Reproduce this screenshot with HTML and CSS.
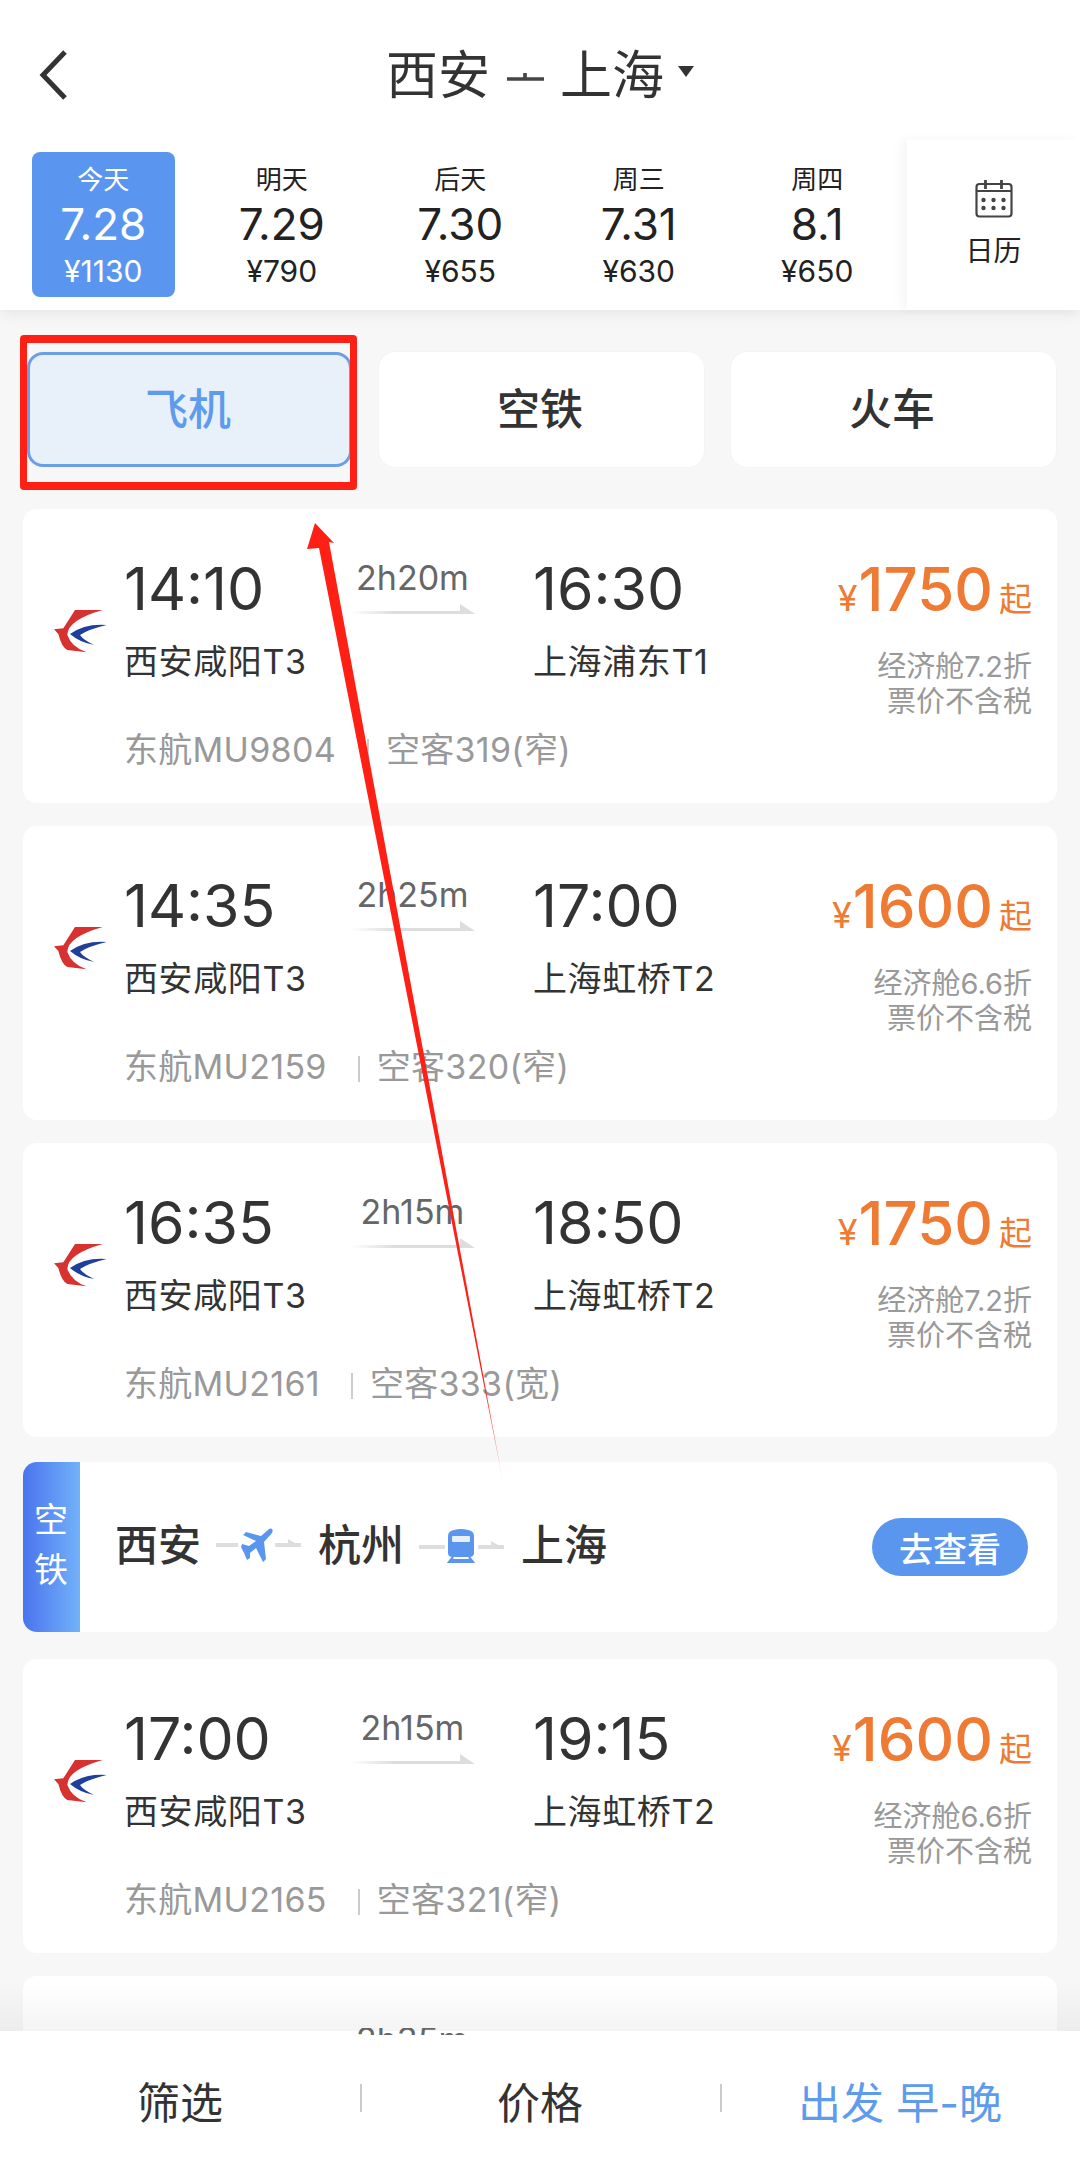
FILE: index.html
```html
<!DOCTYPE html>
<html lang="zh">
<head>
<meta charset="utf-8">
<title>西安 上海</title>
<link rel="stylesheet" href="styles.css">
</head>
<body>
<div class="page">
  <header class="head">
    <div class="nav">
      <svg class="back" viewBox="0 0 32 50"><path d="M28 2 L6 25 L28 48" fill="none" stroke="#333" stroke-width="5"/></svg>
      <div class="title">
        <span>西安</span>
        <svg class="title-arrow" viewBox="0 0 38 10"><path d="M0 8 H37 M18 8 V2" fill="none" stroke="#444" stroke-width="3.6"/></svg>
        <span>上海</span>
        <i class="caret"></i>
      </div>
    </div>
    <div class="strip">
      <div class="dates">
        <div class="date on"><span class="d-l">今天</span><span class="d-n">7.28</span><span class="d-p">¥1130</span></div>
        <div class="date"><span class="d-l">明天</span><span class="d-n">7.29</span><span class="d-p">¥790</span></div>
        <div class="date"><span class="d-l">后天</span><span class="d-n">7.30</span><span class="d-p">¥655</span></div>
        <div class="date"><span class="d-l">周三</span><span class="d-n">7.31</span><span class="d-p">¥630</span></div>
        <div class="date"><span class="d-l">周四</span><span class="d-n">8.1</span><span class="d-p">¥650</span></div>
      </div>
      <div class="cal">
        <svg class="cal-i" viewBox="0 0 38 38"><rect x="1.5" y="4" width="35" height="32.5" rx="3" fill="none" stroke="#444" stroke-width="2.2"/><path d="M1.5 11 H36" stroke="#444" stroke-width="2"/><path d="M10.5 0 V9 M26.5 0 V9" stroke="#444" stroke-width="2.8"/><g fill="#444"><circle cx="8.5" cy="20" r="2.2"/><circle cx="18.5" cy="20" r="2.2"/><circle cx="28.5" cy="20" r="2.2"/><circle cx="8.5" cy="28" r="2.2"/><circle cx="18.5" cy="28" r="2.2"/><circle cx="28.5" cy="28" r="2.2"/></g></svg>
        <span>日历</span>
      </div>
    </div>
  </header>

  <main class="main">
    <div class="tabs">
      <div class="tab on">飞机<b class="mark"></b></div>
      <div class="tab">空铁</div>
      <div class="tab">火车</div>
    </div>

    <article class="card">
      <svg class="logo" viewBox="0 0 270 210"><use href="#mu"/></svg>
      <div class="col dep"><div class="time">14:10</div><div class="st">西安咸阳T3</div><div class="meta">东航MU9804<i class="sep"></i>空客319(窄)</div></div>
      <div class="dur"><span>2h20m</span><i class="line"></i></div>
      <div class="col arr"><div class="time">16:30</div><div class="st">上海浦东T1</div></div>
      <div class="price"><div class="amt"><small>¥</small><strong>1750</strong><em>起</em></div><p>经济舱7.2折</p><p>票价不含税</p></div>
    </article>

    <article class="card">
      <svg class="logo" viewBox="0 0 270 210"><use href="#mu"/></svg>
      <div class="col dep"><div class="time">14:35</div><div class="st">西安咸阳T3</div><div class="meta">东航MU2159<i class="sep"></i>空客320(窄)</div></div>
      <div class="dur"><span>2h25m</span><i class="line"></i></div>
      <div class="col arr"><div class="time">17:00</div><div class="st">上海虹桥T2</div></div>
      <div class="price"><div class="amt"><small>¥</small><strong>1600</strong><em>起</em></div><p>经济舱6.6折</p><p>票价不含税</p></div>
    </article>

    <article class="card">
      <svg class="logo" viewBox="0 0 270 210"><use href="#mu"/></svg>
      <div class="col dep"><div class="time">16:35</div><div class="st">西安咸阳T3</div><div class="meta">东航MU2161<i class="sep"></i>空客333(宽)</div></div>
      <div class="dur"><span>2h15m</span><i class="line"></i></div>
      <div class="col arr"><div class="time">18:50</div><div class="st">上海虹桥T2</div></div>
      <div class="price"><div class="amt"><small>¥</small><strong>1750</strong><em>起</em></div><p>经济舱7.2折</p><p>票价不含税</p></div>
    </article>

    <article class="combo">
      <div class="tag"><span>空</span><span>铁</span></div>
      <div class="route">
        <span class="city">西安</span>
        <svg class="link" viewBox="0 0 86 36"><path d="M0 18 H22 M59 18 H85" stroke="#ddd" stroke-width="4"/><path d="M72 12 L86 20 H72 Z" fill="#ddd"/><path d="M52 3 C55 0 58 2 56 6 L48 15 L50 32 L47 35 L40 21 L34 26 L34 31 L31 33 L28 26 L25 20 L26 17 L33 19 L40 14 L27 8 L30 5 L45 9 Z" fill="#5a96ee"/></svg>
        <span class="city">杭州</span>
        <svg class="link" viewBox="0 0 86 36"><path d="M0 20 H26 M59 20 H85" stroke="#ddd" stroke-width="4"/><path d="M72 14 L86 22 H72 Z" fill="#ddd"/><path d="M35 3 Q42 1 49 3 Q55 4 55 9 V26 Q55 30 50 30 H34 Q29 30 29 26 V9 Q29 4 35 3 Z" fill="#5a96ee"/><rect x="33" y="9" width="18" height="6" rx="1" fill="#e8f0fc"/><path d="M34 30 L30 35 H54 L50 30 M32 33 H52" fill="none" stroke="#5a96ee" stroke-width="2.2"/></svg>
        <span class="city">上海</span>
      </div>
      <div class="go">去查看</div>
    </article>

    <article class="card">
      <svg class="logo" viewBox="0 0 270 210"><use href="#mu"/></svg>
      <div class="col dep"><div class="time">17:00</div><div class="st">西安咸阳T3</div><div class="meta">东航MU2165<i class="sep"></i>空客321(窄)</div></div>
      <div class="dur"><span>2h15m</span><i class="line"></i></div>
      <div class="col arr"><div class="time">19:15</div><div class="st">上海虹桥T2</div></div>
      <div class="price"><div class="amt"><small>¥</small><strong>1600</strong><em>起</em></div><p>经济舱6.6折</p><p>票价不含税</p></div>
    </article>

    <div class="peek-card"></div>
  </main>

  <footer class="bar">
    <div class="peek"><span>2h35m</span></div>
    <div class="bar-item">筛选</div>
    <div class="bar-item">价格</div>
    <div class="bar-item active">出发 早-晚</div>
  </footer>

  <svg class="annot" viewBox="0 0 1080 2163">
    <defs>
      <linearGradient id="fade" gradientUnits="userSpaceOnUse" x1="340" y1="800" x2="503" y2="1482">
        <stop offset="0" stop-color="#ff2015"/>
        <stop offset=".85" stop-color="#ff2015"/>
        <stop offset="1" stop-color="#ff2015" stop-opacity=".25"/>
      </linearGradient>
    </defs>
    <path d="M315 523 L334 543 L329 542 L503 1482 L319 548 L307 549 Z" fill="url(#fade)"/>
  </svg>

  <svg class="defs" viewBox="0 0 270 210">
    <symbol id="mu" viewBox="0 0 270 210">
      <path d="M218 60 H135 L100 115 L72 118 L85 132 Q95 172 112 180 L170 187 Q125 172 112 135 Q112 90 218 60 Z" fill="#d6322f"/>
      <path d="M230 105 Q165 100 120 132 Q150 158 193 165 Q160 150 150 135 Q175 118 230 105 Z" fill="#1f3f9c"/>
    </symbol>
  </svg>
</div>
</body>
</html>
```

FILE: styles.css
```css
* { box-sizing: border-box; margin: 0; padding: 0; }
html, body { margin: 0; background: #f7f7f7; }
body { font-family: Inter, "Noto Sans CJK SC", sans-serif; color: #333; }
i, em { font-style: normal; }

.page { position: relative; width: 1080px; height: 2163px; display: flex; flex-direction: column; overflow: hidden; }

/* header */
.head { height: 310px; flex: none; background: #fff; box-shadow: 0 4px 14px rgba(0,0,0,.07); position: relative; z-index: 1; }
.nav { height: 140px; position: relative; display: flex; align-items: center; justify-content: center; padding-top: 12px; }
.back { position: absolute; left: 37px; top: 50px; width: 32px; height: 50px; }
.title { display: flex; align-items: center; font-size: 52px; line-height: 60px; color: #333; }
.title-arrow { width: 38px; height: 10px; margin: 0 15px 0 17px; }
.caret { width: 0; height: 0; border-left: 8px solid transparent; border-right: 8px solid transparent; border-top: 11px solid #333; margin-left: 14px; margin-top: -10px; }

.strip { height: 170px; display: flex; }
.dates { flex: 1; display: flex; padding: 12px 0 13px 14px; }
.date { width: 178.5px; display: flex; flex-direction: column; align-items: center; color: #222; padding-top: 12px; position: relative; }
.date.on { color: #fff; }
.date.on::before { content: ""; position: absolute; left: 18px; top: 0; width: 143px; height: 145px; background: #5a96f0; border-radius: 8px; }
.date span { position: relative; }
.d-l { font-size: 26px; line-height: 32px; }
.d-n { font-size: 44px; line-height: 54px; margin-top: 1px; }
.d-p { font-size: 30px; line-height: 34px; margin-top: 3px; }
.cal { width: 174px; flex: none; display: flex; flex-direction: column; align-items: center; background: #fff; box-shadow: -6px 0 10px rgba(0,0,0,.04); padding-top: 40px; font-size: 28px; color: #222; }
.cal-i { width: 38px; height: 38px; }
.cal span { margin-top: 15px; line-height: 36px; }

/* main */
.main { flex: 1; min-height: 0; overflow: hidden; padding: 42px 23px 0; display: flex; flex-direction: column; }
.tabs { display: grid; grid-template-columns: 325px 325px 325px; column-gap: 27px; margin-left: 4px; margin-bottom: 42px; }
.tab { height: 115px; background: #fff; border-radius: 16px; display: flex; align-items: center; justify-content: center; font-size: 43px; font-weight: 500; color: #333; box-shadow: 0 0 2px rgba(0,0,0,.05); padding: 0 3px 8px 0; position: relative; }
.tab.on { background: #e8f0fa; color: #5f9bec; border: 3px solid #6a9fe6; }
.mark { position: absolute; left: -10px; right: -8px; top: -20px; bottom: -26px; border: solid #ff2015; border-width: 8px 7px; border-radius: 4px; }

.card { height: 294px; margin-bottom: 23px; background: #fff; border-radius: 14px; position: relative; display: grid; grid-template-columns: 102px 220px 187px 1fr auto; padding: 48px 25px 0 0; flex: none; }
.logo { width: 90px; height: 70px; margin: 33px 0 0 7px; }
.col { min-width: 0; white-space: nowrap; }
.dep { margin-left: -1px; }
.arr { margin-left: 1px; }
.time { font-size: 59px; line-height: 64px; color: #333; }
.st { font-size: 34px; line-height: 44px; margin-top: 19px; letter-spacing: .6px; color: #333; }
.meta { font-size: 34px; line-height: 44px; margin-top: 44px; letter-spacing: .3px; color: #999; display: flex; align-items: center; }
.sep { flex: none; width: 2px; height: 26px; background: #ccc; margin: 4px 17px 0 31px; }
.dur { display: flex; flex-direction: column; align-items: center; width: 125px; margin-left: 5px; color: #666; font-size: 34px; }
.dur span { line-height: 40px; margin-top: 1px; white-space: nowrap; }
.line { width: 125px; height: 10px; margin-top: 6px; background: linear-gradient(90deg, transparent, #ddd 35%); clip-path: polygon(0 70%, 88% 70%, 88% 0, 100% 100%, 0 100%); }

.price { text-align: right; white-space: nowrap; }
.amt { display: flex; align-items: baseline; justify-content: flex-end; color: #ee7a33; height: 64px; line-height: 64px; margin: 0 0 28px; }
.amt small { font-size: 36px; margin-right: 1px; }
.amt strong { font-weight: 500; font-size: 60px; }
.amt em { font-size: 33px; margin-left: 6px; }
.price p { font-size: 29px; line-height: 35px; color: #999; }

/* combo */
.combo { height: 170px; margin: 2px 0 27px; background: #fff; border-radius: 14px; display: flex; align-items: center; flex: none; overflow: hidden; }
.tag { width: 57px; height: 100%; flex: none; background: linear-gradient(90deg, #4a74ee, #72b2f9); color: #fff; font-size: 34px; display: flex; flex-direction: column; align-items: center; justify-content: center; line-height: 50px; padding: 0 1px 4px 0; }
.route { flex: 1; display: flex; align-items: center; padding: 0 0 4px 35px; }
.city { font-size: 43px; font-weight: 500; line-height: 56px; color: #333; }
.link { width: 86px; height: 36px; margin: 0 16px 0 15px; }
.go { width: 156px; height: 58px; margin: 0 29px 0 0; border-radius: 29px; background: #5a96ee; color: #fff; font-size: 34px; font-weight: 500; display: flex; align-items: center; justify-content: center; }

.peek-card { height: 120px; background: #fff; border-radius: 14px; flex: none; }

/* bar */
.bar { height: 132px; flex: none; background: #fff; position: relative; display: grid; grid-template-columns: repeat(3, 360px); align-items: center; padding-top: 6px; }
.bar::before { content: ""; position: absolute; left: 0; right: 0; top: -48px; height: 48px; background: linear-gradient(180deg, rgba(0,0,0,0), rgba(0,0,0,.045)); }
.peek { position: absolute; left: 356px; top: -3px; height: 7px; overflow: hidden; font-size: 34px; line-height: 40px; color: #666; }
.peek span { display: block; margin-top: -8px; }
.bar-item { text-align: center; font-size: 43px; color: #333; position: relative; }
.bar-item + .bar-item::before { content: ""; position: absolute; left: 0; top: 50%; width: 2px; height: 28px; margin-top: -16px; background: #ccc; }
.bar-item.active { color: #5f9bec; }

.annot { position: absolute; left: 0; top: 0; width: 1080px; height: 2163px; pointer-events: none; z-index: 3; }
.defs { position: absolute; width: 0; height: 0; }
```
